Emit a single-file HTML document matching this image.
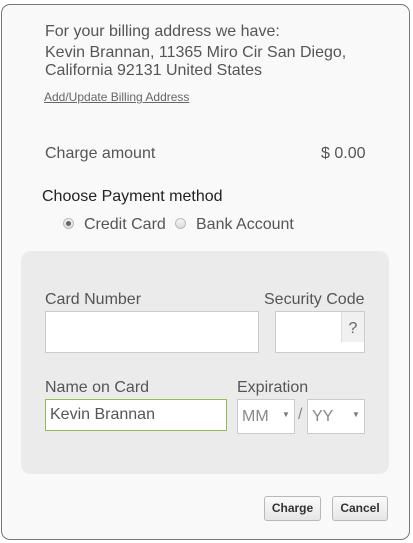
<!DOCTYPE html>
<html><head><meta charset="utf-8"><style>
*{box-sizing:border-box;margin:0;padding:0}
body{width:413px;height:543px;background:#fff;font-family:"Liberation Sans",Arial,sans-serif;position:relative;overflow:hidden;color:#555}
.box{position:absolute;left:1px;top:4px;width:409px;height:536px;border:1px solid #777;border-radius:9px;background:#f9f9f9}
.t{position:absolute;font-size:16px;color:#555;white-space:nowrap;line-height:18px;margin-top:1px}
.panel{position:absolute;left:21px;top:251px;width:368px;height:223px;background:#ebebeb;border-radius:10px}
.in{position:absolute;background:#fff;border:1px solid #ccc}
.btn{position:absolute;top:496px;height:25px;border:1px solid #b8b8b8;border-radius:3px;background:linear-gradient(#fafafa,#e6e6e6);font-size:12px;font-weight:bold;color:#333;text-align:center;line-height:23px}
.radio{position:absolute;width:11px;height:11px;border-radius:50%;border:1px solid #bbb;background:linear-gradient(#f4f4f4,#ddd)}
.arr{position:absolute;font-size:8px;color:#777}
</style></head><body>
<div class="box"></div>
<div class="t" style="left:45px;top:22px">For your billing address we have:</div>
<div class="t" style="left:45px;top:43px">Kevin Brannan, 11365 Miro Cir San Diego,</div>
<div class="t" style="left:45px;top:61px">California 92131 United States</div>
<div class="t" style="left:44px;top:87px;font-size:12px;text-decoration:underline;color:#666">Add/Update Billing Address</div>
<div class="t" style="left:45px;top:144px">Charge amount</div>
<div class="t" style="left:321px;top:144px">$ 0.00</div>
<div class="t" style="left:42px;top:187px;color:#222">Choose Payment method</div>
<div class="radio" style="left:63px;top:218px"><div style="position:absolute;left:2px;top:2px;width:5px;height:5px;border-radius:50%;background:#666"></div></div>
<div class="t" style="left:84px;top:215px">Credit Card</div>
<div class="radio" style="left:175px;top:218px"></div>
<div class="t" style="left:196px;top:215px">Bank Account</div>
<div class="panel"></div>
<div class="t" style="left:45px;top:290px">Card Number</div>
<div class="t" style="left:264px;top:290px">Security Code</div>
<div class="in" style="left:45px;top:311px;width:214px;height:42px"></div>
<div class="in" style="left:275px;top:311px;width:90px;height:42px"></div>
<div style="position:absolute;left:341px;top:312px;width:23px;height:30px;background:#f0f0f0;border-left:1px solid #ddd;font-size:16px;color:#666;text-align:center;line-height:34px">?</div>
<div class="t" style="left:45px;top:378px">Name on Card</div>
<div class="t" style="left:237px;top:378px">Expiration</div>
<div class="in" style="left:45px;top:399px;width:182px;height:32px;border-color:#8cc152"></div>
<div class="t" style="left:50px;top:405px;color:#555">Kevin Brannan</div>
<div class="in" style="left:237px;top:399px;width:58px;height:35px"></div>
<div class="t" style="left:242px;top:407px;color:#888">MM</div>
<div class="arr" style="left:282px;top:410px">▼</div>
<div class="t" style="left:298px;top:405px;color:#888">/</div>
<div class="in" style="left:307px;top:399px;width:58px;height:35px"></div>
<div class="t" style="left:312px;top:407px;color:#888">YY</div>
<div class="arr" style="left:352px;top:410px">▼</div>
<div class="btn" style="left:264px;width:57px">Charge</div>
<div class="btn" style="left:332px;width:56px">Cancel</div>
</body></html>
